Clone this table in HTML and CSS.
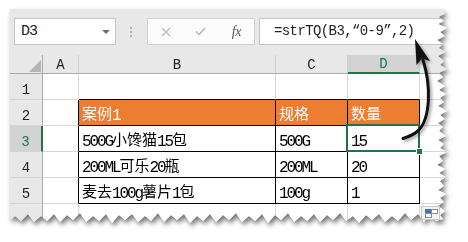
FILE: index.html
```html
<!DOCTYPE html>
<html lang="zh">
<head>
<meta charset="utf-8">
<title>strTQ</title>
<link rel="stylesheet" href="styles.css">
</head>
<body>
<div class="page">
  <div class="paper">
    <div class="sheet">
      <div class="toolbar">
        <div class="namebox"><span class="nb-text">D3</span><span class="caret"></span></div>
        <div class="grip"><i></i><i></i><i></i></div>
        <div class="btns">
          <span class="btn"><svg width="10" height="10" viewBox="0 0 10 10"><path d="M1 1L9 9M9 1L1 9" stroke="#b8b8b8" stroke-width="1.2" fill="none"/></svg></span>
          <span class="btn"><svg width="11" height="9" viewBox="0 0 11 9"><path d="M1 4.5L4 7.5L10 1" stroke="#b8b8b8" stroke-width="1.6" fill="none"/></svg></span>
          <span class="btn fx">fx</span>
        </div>
        <div class="formula">=strTQ(B3,“0-9”,2)</div>
      </div>
      <div class="grid">
        <div class="corner"><span class="tri"></span></div>
        <div class="ch">A</div>
        <div class="ch">B</div>
        <div class="ch">C</div>
        <div class="ch sel-c">D</div>
        <div class="ch"></div>

        <div class="rh">1</div>
        <div class="c"></div>
        <div class="c top"></div>
        <div class="c top"></div>
        <div class="c top"></div>
        <div class="c"></div>

        <div class="rh">2</div>
        <div class="c lft"></div>
        <div class="c t hd">案例<span class="l">1</span></div>
        <div class="c t hd">规格</div>
        <div class="c t hd">数量</div>
        <div class="c"></div>

        <div class="rh sel-r">3</div>
        <div class="c lft"></div>
        <div class="c t"><span class="l">500G</span>小馋猫<span class="l">15</span>包</div>
        <div class="c t"><span class="l">500G</span></div>
        <div class="c t sel"><span class="l">15</span></div>
        <div class="c"></div>

        <div class="rh">4</div>
        <div class="c lft"></div>
        <div class="c t"><span class="l">200ML</span>可乐<span class="l">20</span>瓶</div>
        <div class="c t"><span class="l">200ML</span></div>
        <div class="c t"><span class="l">20</span></div>
        <div class="c"></div>

        <div class="rh">5</div>
        <div class="c lft"></div>
        <div class="c t">麦去<span class="l">100g</span>薯片<span class="l">1</span>包</div>
        <div class="c t"><span class="l">100g</span></div>
        <div class="c t"><span class="l">1</span></div>
        <div class="c"></div>

        <div class="rh"></div>
        <div class="c"></div>
        <div class="c"></div>
        <div class="c"></div>
        <div class="c"></div>
        <div class="c"></div>
      </div>
    </div>
  </div>

  <div class="paste"><span class="p-blue"></span><span class="p-w1"></span><span class="p-w2"></span></div>

  <svg class="arrow" width="468" height="242" viewBox="0 0 468 242">
    <path d="M423 60 C 431 85, 431 118, 418 131 C 413 135, 408 137, 403 138.5" stroke="#111" stroke-width="3" fill="none" stroke-linecap="round"/>
    <path d="M415 39 L430 61 L422 58.5 L416.5 65 Z" fill="#111"/>
  </svg>
</div>
</body>
</html>
```

FILE: styles.css
```css
html, body {
  margin: 0;
  padding: 0;
  background: #ffffff;
}

.page {
  position: relative;
  width: 468px;
  height: 242px;
  padding: 9px 0 0 10px;
  box-sizing: border-box;
  overflow: hidden;
}

.paper {
  width: 438px;
  filter: drop-shadow(2px 3px 2.5px rgba(0, 0, 0, 0.55));
}

.sheet {
  width: 438px;
  height: 217px;
  background: #e8e8e8;
  display: flex;
  flex-direction: column;
  clip-path: polygon(0 0, 430px 0, 436px 4px, 429px 8px, 434px 12px, 428px 15px, 437px 19px, 430px 23px, 435px 27px, 427px 31px, 433px 35px, 429px 39px, 436px 43px, 428px 47px, 434px 52px, 430px 56px, 437px 60px, 429px 64px, 433px 68px, 427px 72px, 435px 77px, 429px 81px, 436px 85px, 430px 89px, 434px 93px, 428px 97px, 437px 102px, 430px 106px, 435px 110px, 428px 114px, 433px 118px, 429px 122px, 436px 127px, 428px 131px, 434px 135px, 430px 139px, 437px 143px, 429px 147px, 433px 152px, 427px 156px, 435px 160px, 429px 164px, 436px 168px, 430px 172px, 434px 177px, 428px 181px, 436px 185px, 430px 189px, 434px 193px, 428px 197px, 435px 202px, 430px 206px, 433px 210px, 426px 212px, 420px 206px, 414px 213px, 408px 205px, 401px 211px, 395px 204px, 388px 212px, 382px 207px, 375px 213px, 369px 205px, 362px 211px, 356px 206px, 349px 214px, 343px 207px, 336px 212px, 330px 204px, 323px 211px, 317px 206px, 310px 213px, 304px 205px, 297px 212px, 291px 207px, 284px 213px, 278px 204px, 271px 211px, 265px 206px, 258px 214px, 252px 205px, 245px 212px, 239px 207px, 232px 213px, 226px 204px, 219px 211px, 213px 206px, 206px 213px, 200px 205px, 193px 212px, 187px 207px, 180px 214px, 174px 205px, 167px 211px, 161px 206px, 154px 213px, 148px 204px, 141px 212px, 135px 207px, 128px 213px, 122px 205px, 115px 211px, 109px 206px, 102px 214px, 96px 205px, 89px 212px, 83px 207px, 76px 213px, 70px 204px, 63px 211px, 57px 206px, 50px 213px, 44px 205px, 37px 212px, 31px 207px, 24px 213px, 18px 205px, 11px 212px, 5px 207px, 0 211px);
}

/* ---------- toolbar ---------- */
.toolbar {
  height: 46px;
  flex: none;
  display: flex;
  align-items: flex-start;
  padding: 9px 0 0 4px;
  box-sizing: border-box;
}

.namebox {
  width: 102px;
  height: 27px;
  box-sizing: border-box;
  border: 1px solid #c6c6c6;
  background: #ffffff;
  display: flex;
  align-items: center;
  justify-content: space-between;
  padding: 0 5px 0 6px;
}

.nb-text {
  font-family: "Liberation Mono", monospace;
  font-size: 15px;
  letter-spacing: -1px;
  color: #222;
}

.caret {
  width: 0;
  height: 0;
  border-left: 4px solid transparent;
  border-right: 4px solid transparent;
  border-top: 4px solid #707070;
}

.grip {
  margin-left: 14px;
  padding-top: 9px;
  display: flex;
  flex-direction: column;
  gap: 2px;
}

.grip i {
  display: block;
  width: 2px;
  height: 2px;
  background: #b0b0b0;
}

.btns {
  margin-left: 15px;
  width: 108px;
  height: 27px;
  box-sizing: border-box;
  border: 1px solid #d0d0d0;
  background: #fcfcfc;
  display: grid;
  grid-template-columns: repeat(3, 1fr);
  align-items: center;
  justify-items: center;
}

.btn {
  display: flex;
  align-items: center;
  justify-content: center;
}

.fx {
  font-family: "Liberation Serif", serif;
  font-style: italic;
  font-size: 14px;
  color: #555;
  letter-spacing: -0.5px;
}

.formula {
  margin-left: 4px;
  flex: 1;
  height: 27px;
  box-sizing: border-box;
  border: 1px solid #c6c6c6;
  background: #ffffff;
  padding-left: 14px;
  font-family: "Liberation Mono", monospace;
  font-size: 14px;
  letter-spacing: -0.6px;
  line-height: 25px;
  color: #222;
  white-space: nowrap;
}

/* ---------- grid ---------- */
.grid {
  flex: 1;
  display: grid;
  grid-template-columns: 33px 36px 197px 72px 72px 1fr;
  grid-template-rows: 19px repeat(5, 26px) 1fr;
  background: #ffffff;
}

.grid > div {
  box-sizing: border-box;
  border-right: 1px solid #d8d8d8;
  border-bottom: 1px solid #d8d8d8;
}

.corner {
  background: #e8e8e8;
  border-right-color: #ababab !important;
  border-bottom-color: #ababab !important;
  display: flex;
  justify-content: flex-end;
  align-items: flex-end;
  padding: 0 1px 1px 0;
}

.tri {
  width: 12px;
  height: 12px;
  background: #b4b4b4;
  clip-path: polygon(100% 0, 100% 100%, 0 100%);
}

.ch {
  background: #e8e8e8;
  border-bottom-color: #ababab !important;
  border-right-color: #d0d0d0 !important;
  display: flex;
  justify-content: center;
  align-items: flex-end;
  font-family: "Liberation Mono", monospace;
  font-size: 14px;
  line-height: 14px;
  padding-bottom: 1px;
  color: #222;
}

.rh {
  background: #e8e8e8;
  border-right-color: #ababab !important;
  border-bottom-color: #d4d4d4 !important;
  display: flex;
  justify-content: center;
  align-items: flex-end;
  font-family: "Liberation Mono", monospace;
  font-size: 14px;
  line-height: 14px;
  padding-bottom: 2px;
  color: #222;
}

.sel-c {
  background: #d3d3d3;
  border-bottom: 2px solid #217346 !important;
  color: #217346;
}

.sel-r {
  background: #d3d3d3;
  border-right: 2px solid #217346 !important;
  color: #217346;
}

.c {
  padding-left: 3px;
  font-family: "Noto Sans CJK SC", sans-serif;
  font-size: 15px;
  line-height: 25px;
  color: #000;
  white-space: nowrap;
  overflow: visible;
}

.l {
  font-family: "Liberation Mono", monospace;
  font-size: 16px;
  letter-spacing: -2.1px;
  vertical-align: -1px;
}

.grid > .t {
  border-right-color: #000;
  border-bottom-color: #000;
}

.grid > .top {
  border-bottom-color: #000;
}

.grid > .lft {
  border-right-color: #000;
}

.hd {
  background: #ed7d31;
  color: #ffffff;
}

.sel {
  position: relative;
}

.sel::after {
  content: "";
  position: absolute;
  left: -2px;
  top: -2px;
  right: -1px;
  bottom: -1px;
  border: 2px solid #217346;
}

.sel::before {
  content: "";
  position: absolute;
  right: -4px;
  bottom: -4px;
  width: 5px;
  height: 5px;
  background: #217346;
  border: 1px solid #ffffff;
  z-index: 2;
}

/* ---------- overlays ---------- */
.paste {
  position: absolute;
  left: 421px;
  top: 206px;
  width: 19px;
  height: 14px;
  box-sizing: border-box;
  border: 1px solid #c8c8c8;
  background: #f2f2f2;
}

.p-blue {
  position: absolute;
  left: 3px;
  top: 2px;
  width: 6px;
  height: 4px;
  background: #3f74cc;
}

.p-w1 {
  position: absolute;
  left: 9px;
  top: 2px;
  width: 5px;
  height: 3px;
  border: 1px solid #8a8a8a;
  background: #fff;
}

.p-w2 {
  position: absolute;
  left: 3px;
  top: 6px;
  width: 5px;
  height: 3px;
  border: 1px solid #8a8a8a;
  background: #fff;
}

.arrow {
  position: absolute;
  left: 0;
  top: 0;
  filter: drop-shadow(2px 2px 1.5px rgba(0, 0, 0, 0.35));
}
```
